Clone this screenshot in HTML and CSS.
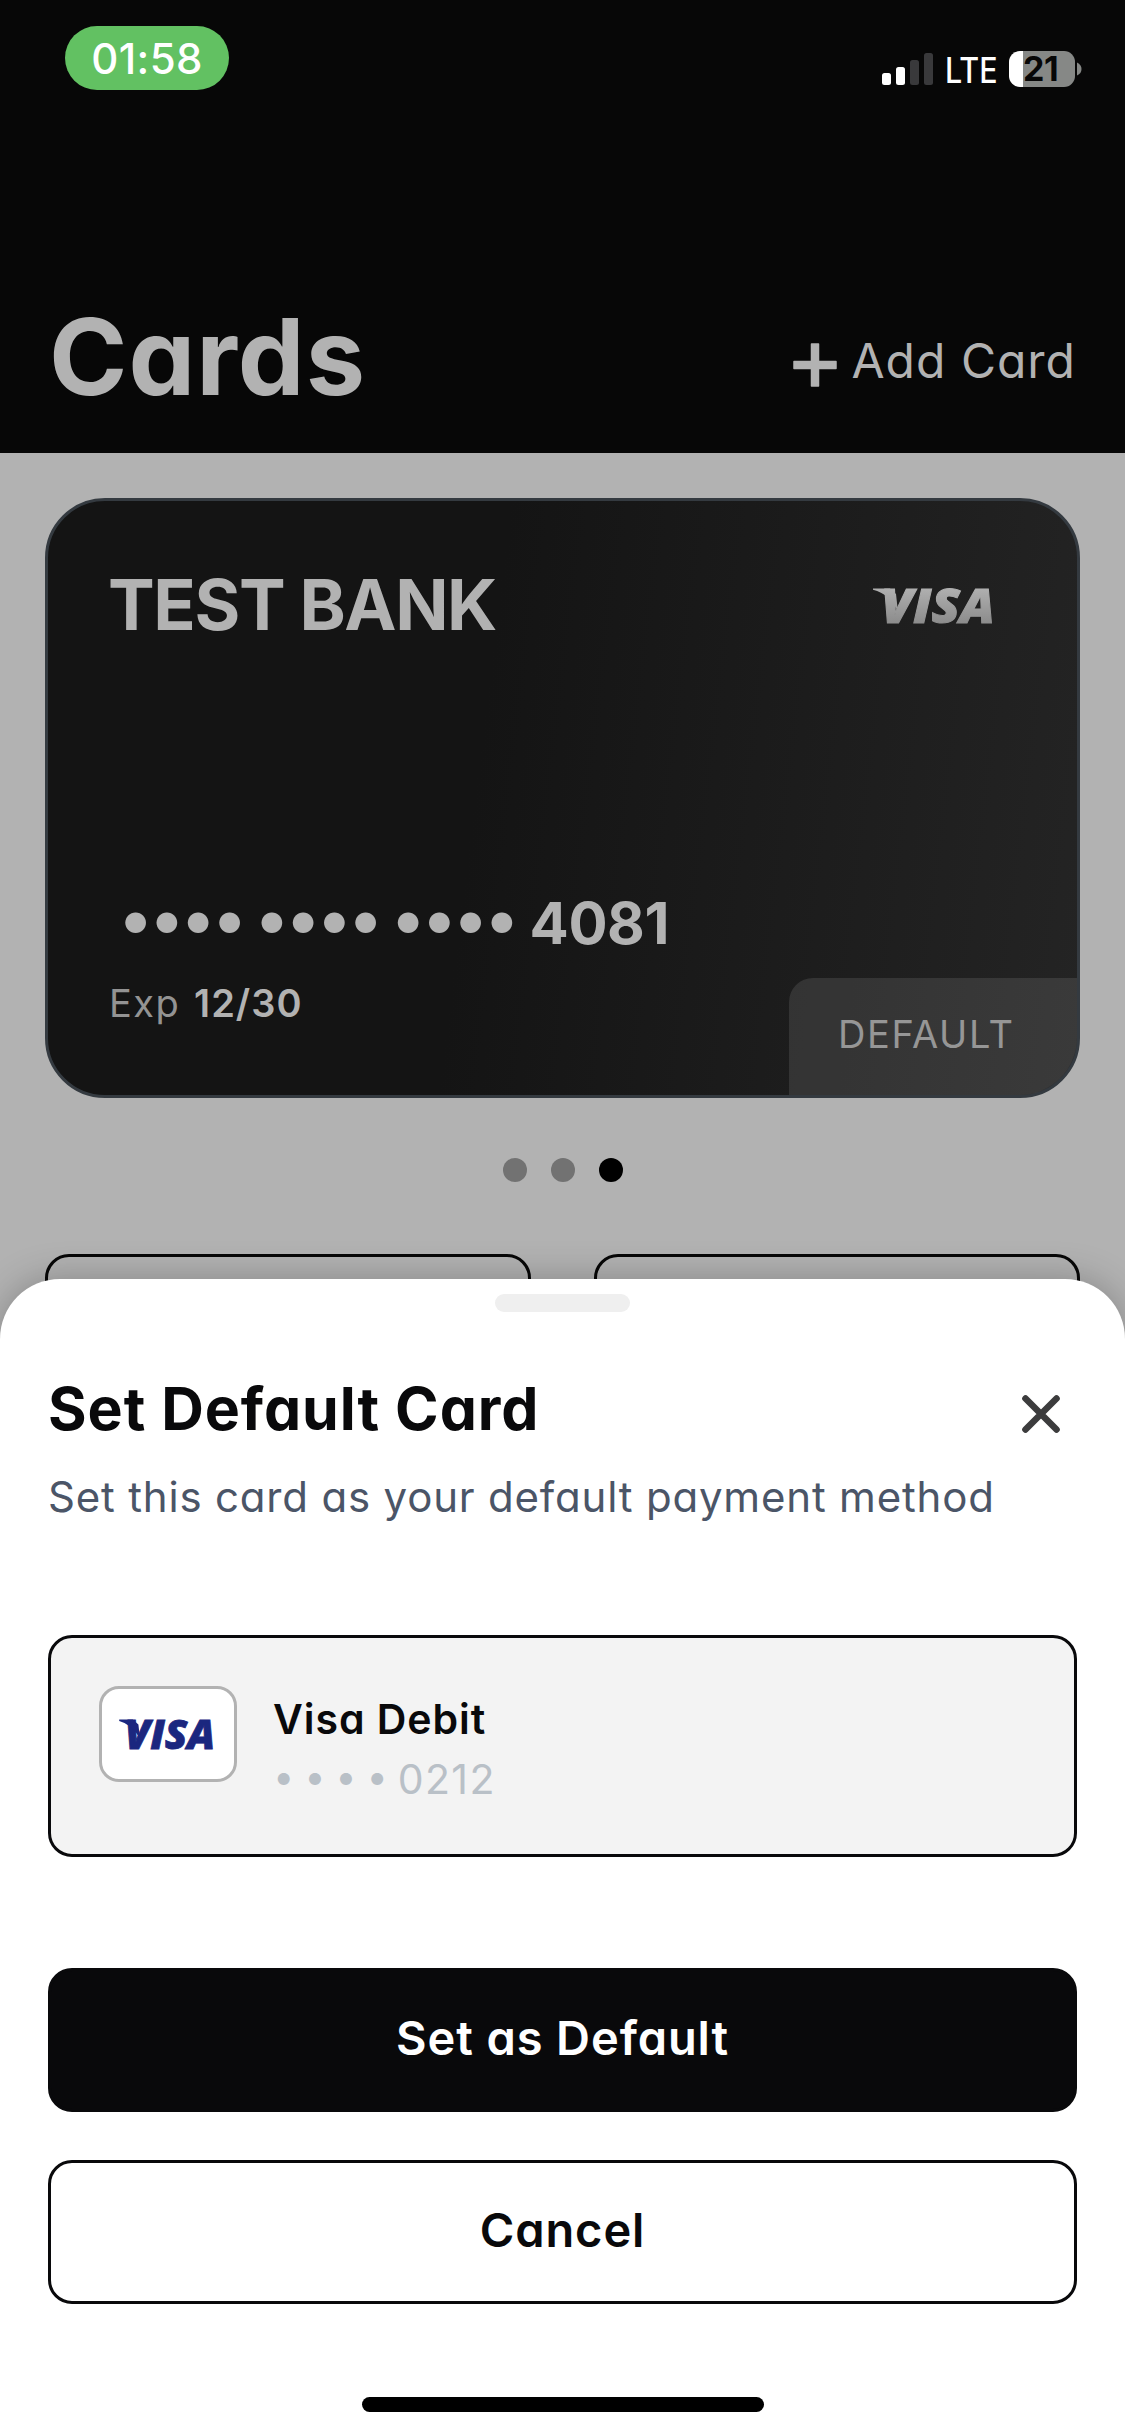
FILE: index.html
```html
<!DOCTYPE html>
<html lang="en">
<head>
<meta charset="utf-8">
<title>Cards</title>
<link rel="stylesheet" href="styles.css">
</head>
<body>
<div class="screen">
  <header class="header">
    <div class="status">
      <div class="clock"><span>01:58</span></div>
      <div class="indicators">
        <svg class="signal" width="51" height="32" viewBox="0 0 51 32">
          <rect x="0" y="20" width="9" height="12" rx="2.5" fill="#fff"/>
          <rect x="14" y="14" width="9" height="18" rx="2.5" fill="#fff"/>
          <rect x="28" y="7" width="9" height="25" rx="2.5" fill="#39393b"/>
          <rect x="42" y="0" width="9" height="32" rx="2.5" fill="#39393b"/>
        </svg>
        <span class="network">LTE</span>
        <div class="battery"><span>21</span></div>
        <svg class="nub" width="5" height="14" viewBox="0 0 5 14"><path d="M0 0.5Q4.5 2.5 4.5 7T0 13.5Z" fill="#868886"/></svg>
      </div>
    </div>
    <div class="title-row">
      <h1 class="title">Cards</h1>
      <div class="add">
        <svg width="44" height="44" viewBox="0 0 44 44"><path d="M1 18.5H43V25.500H1ZM18.500 1H25.500V43H18.500Z" fill="#b2b2b2" stroke="#b2b2b2" stroke-width="1.500" stroke-linejoin="round"/></svg>
        <span>Add Card</span>
      </div>
    </div>
  </header>

  <main class="content">
    <section class="card">
      <div class="card-top">
        <span class="bank">TEST BANK</span>
        <svg class="visa" width="120" height="35" viewBox="0 0 120 35">
          <defs><linearGradient id="silver" x1="0" y1="0" x2="0" y2="35" gradientUnits="userSpaceOnUse"><stop offset="0" stop-color="#b0b0b0"/><stop offset="1" stop-color="#8c8c8c"/></linearGradient></defs>
          <text class="visa-text" x="9" y="34.5" textLength="114" lengthAdjust="spacingAndGlyphs" font-size="47" fill="url(#silver)" stroke="url(#silver)" stroke-width="1">VISA</text>
          <path d="M1 0.5H18L24 6L26 24Q18 6 1 1.8Z" fill="url(#silver)"/>
        </svg>
      </div>
      <div class="number"><span class="mask">•••• •••• ••••</span><span class="digits">4081</span></div>
      <div class="expiry"><span class="exp-label">Exp</span><span class="exp-date">12/30</span></div>
      <div class="badge"><span>DEFAULT</span></div>
    </section>
    <div class="pager"><i></i><i></i><i class="on"></i></div>
    <div class="actions"><div></div><div></div></div>
  </main>

  <section class="sheet">
    <div class="handle"></div>
    <div class="sheet-head">
      <h2 class="sheet-title">Set Default Card</h2>
      <svg class="close" width="38" height="38" viewBox="0 0 38 38"><path d="M3.5 3.5L34.5 34.5M34.5 3.5L3.5 34.5" stroke="#3c3c3d" stroke-width="6.6" stroke-linecap="round"/></svg>
    </div>
    <p class="sheet-sub">Set this card as your default payment method</p>
    <div class="method">
      <div class="brand">
        <svg class="visa" width="96" height="32" viewBox="0 0 120 40">
          <text class="visa-text" x="6" y="38.5" textLength="113" lengthAdjust="spacingAndGlyphs" font-size="51" fill="#1b277f" stroke="#1b277f" stroke-width="1">VISA</text>
          <path d="M-1 2H16L23 8L25 26Q16 8 -1 3.6Z" fill="#1b277f"/>
        </svg>
      </div>
      <div class="method-text">
        <div class="method-name">Visa Debit</div>
        <div class="method-number"><span class="mask">••••</span><span class="digits">0212</span></div>
      </div>
    </div>
    <div class="btn primary">Set as Default</div>
    <div class="btn secondary">Cancel</div>
    <div class="home"></div>
  </section>
</div>
</body>
</html>
```

FILE: styles.css
```css
* { box-sizing: border-box; }
body { margin: 0; }
.screen {
  position: relative;
  width: 1125px;
  height: 2436px;
  overflow: hidden;
  background: #b2b2b2;
  color: #09090b;
  font-family: Inter, "Liberation Sans", sans-serif;
  font-feature-settings: "cv11";
  white-space: nowrap;
}
h1, h2, p { margin: 0; }
svg { display: block; flex: none; overflow: visible; }

.header { height: 453px; background: #070707; color: #b2b2b2; }
.status {
  display: flex;
  justify-content: space-between;
  align-items: flex-start;
  height: 297px;
  padding: 26px 43px 0 65px;
}
.clock {
  display: flex;
  align-items: center;
  justify-content: center;
  width: 164px;
  height: 64px;
  border-radius: 32px;
  background: #62c162;
  color: #fff;
  font-size: 42px;
  font-weight: 500;
  letter-spacing: 0.4px;
}
.indicators { display: flex; align-items: center; height: 36px; margin-top: 25px; color: #fff; }
.network {
  width: 50px;
  margin: 2px 12px 0 12px;
  font-size: 35px;
  font-weight: 500;
  line-height: 36px;
  transform: scaleX(0.87);
  transform-origin: left;
}
.battery {
  width: 66px;
  height: 36px;
  margin-left: 2px;
  padding-left: 14px;
  border-radius: 11px;
  background: linear-gradient(90deg, #fff 14px, #868886 14px);
  color: #070707;
  font-size: 34px;
  font-weight: 700;
  line-height: 36px;
  letter-spacing: -0.5px;
}
.nub { margin-left: 2px; }
.title-row {
  display: flex;
  justify-content: space-between;
  align-items: center;
  height: 120px;
  padding: 0 49px 0 49px;
}
.title { font-size: 106px; font-weight: 700; line-height: 120px; letter-spacing: 1px; }
.add { display: flex; align-items: center; gap: 14px; margin-top: 7px; font-size: 48px; letter-spacing: 1px; }
.add svg { margin-top: 8px; }

.content { padding: 45px; }
.card {
  position: relative;
  height: 600px;
  padding: 62px 85px 0 60px;
  border: 3px solid #343a40;
  border-radius: 60px;
  background: linear-gradient(97deg, #141414 42%, #242424 100%);
  color: #b2b2b2;
  overflow: hidden;
}
.card-top { display: flex; justify-content: space-between; align-items: center; height: 84px; }
.bank { font-size: 70px; font-weight: 700; line-height: 84px; letter-spacing: -1.4px; }
.visa-text { font-family: "Open Sans", "Noto Sans", sans-serif; font-weight: 800; font-style: italic; }
.number { display: flex; align-items: center; height: 70px; margin-top: 241px; font-size: 58px; font-weight: 700; }
.number .mask { padding: 0 12px 10px 12px; font-size: 66px; word-spacing: -4.6px; }
.number .digits { letter-spacing: -0.4px; }
.expiry { display: flex; align-items: center; gap: 14px; height: 45px; margin-top: 22px; padding-left: 1px; font-size: 38px; }
.exp-label { color: #939393; letter-spacing: 1.4px; }
.exp-date { font-weight: 600; letter-spacing: 1px; }
.badge {
  position: absolute;
  right: 0;
  bottom: 0;
  width: 288px;
  height: 117px;
  padding-left: 49px;
  border-top-left-radius: 24px;
  background: rgba(255, 255, 255, 0.1);
  color: #969696;
  font-size: 38px;
  line-height: 112px;
  letter-spacing: 1.6px;
}
.pager { display: flex; justify-content: center; gap: 24px; margin-top: 60px; }
.pager i { width: 24px; height: 24px; border-radius: 50%; background: #727272; }
.pager .on { background: #000; }
.actions { display: flex; gap: 63px; margin-top: 72px; }
.actions div { flex: 1; height: 144px; border: 3px solid #070707; border-radius: 24px; }

.sheet {
  position: absolute;
  left: 0;
  right: 0;
  top: 1279px;
  bottom: 0;
  padding: 15px 48px 0;
  border-radius: 60px 60px 0 0;
  background: #fff;
  box-shadow: 0 0 36px rgba(0, 0, 0, 0.25);
}
.handle { width: 135px; height: 18px; margin: 0 auto; border-radius: 9px; background: #efefef; }
.sheet-head { display: flex; justify-content: space-between; align-items: center; height: 70px; margin-top: 62px; padding-right: 17px; }
.sheet-title { font-size: 59px; font-weight: 700; line-height: 70px; letter-spacing: 0.95px; }
.close { margin-top: 10px; }
.sheet-sub { height: 50px; margin-top: 28px; color: #4b5567; font-size: 42px; line-height: 50px; letter-spacing: 0.81px; }
.method {
  display: flex;
  gap: 36px;
  height: 222px;
  margin-top: 113px;
  padding: 48px;
  border: 3px solid #09090b;
  border-radius: 24px;
  background: #f3f3f3;
}
.brand {
  display: flex;
  align-items: center;
  justify-content: center;
  width: 138px;
  height: 96px;
  border: 3px solid #b2b2b2;
  border-radius: 20px;
  background: #fff;
}
.method-name { margin-top: 8px; font-size: 41px; font-weight: 600; line-height: 50px; letter-spacing: 0.95px; }
.method-number { display: flex; align-items: center; height: 50px; margin-top: 10px; color: #b9c0c7; font-size: 41px; }
.method-number .mask { padding-bottom: 6px; font-size: 38px; letter-spacing: 9.8px; }
.method-number .digits { letter-spacing: 1.4px; }
.btn {
  display: flex;
  align-items: center;
  justify-content: center;
  height: 144px;
  padding-bottom: 6px;
  border: 3px solid #09090b;
  border-radius: 24px;
  font-size: 47px;
  font-weight: 600;
  letter-spacing: 0.9px;
}
.primary { margin-top: 111px; background: #09090b; color: #fff; }
.secondary { margin-top: 48px; background: #fff; }
.home { width: 402px; height: 15px; margin: 93px auto 0; border-radius: 8px; background: #000; }
```
